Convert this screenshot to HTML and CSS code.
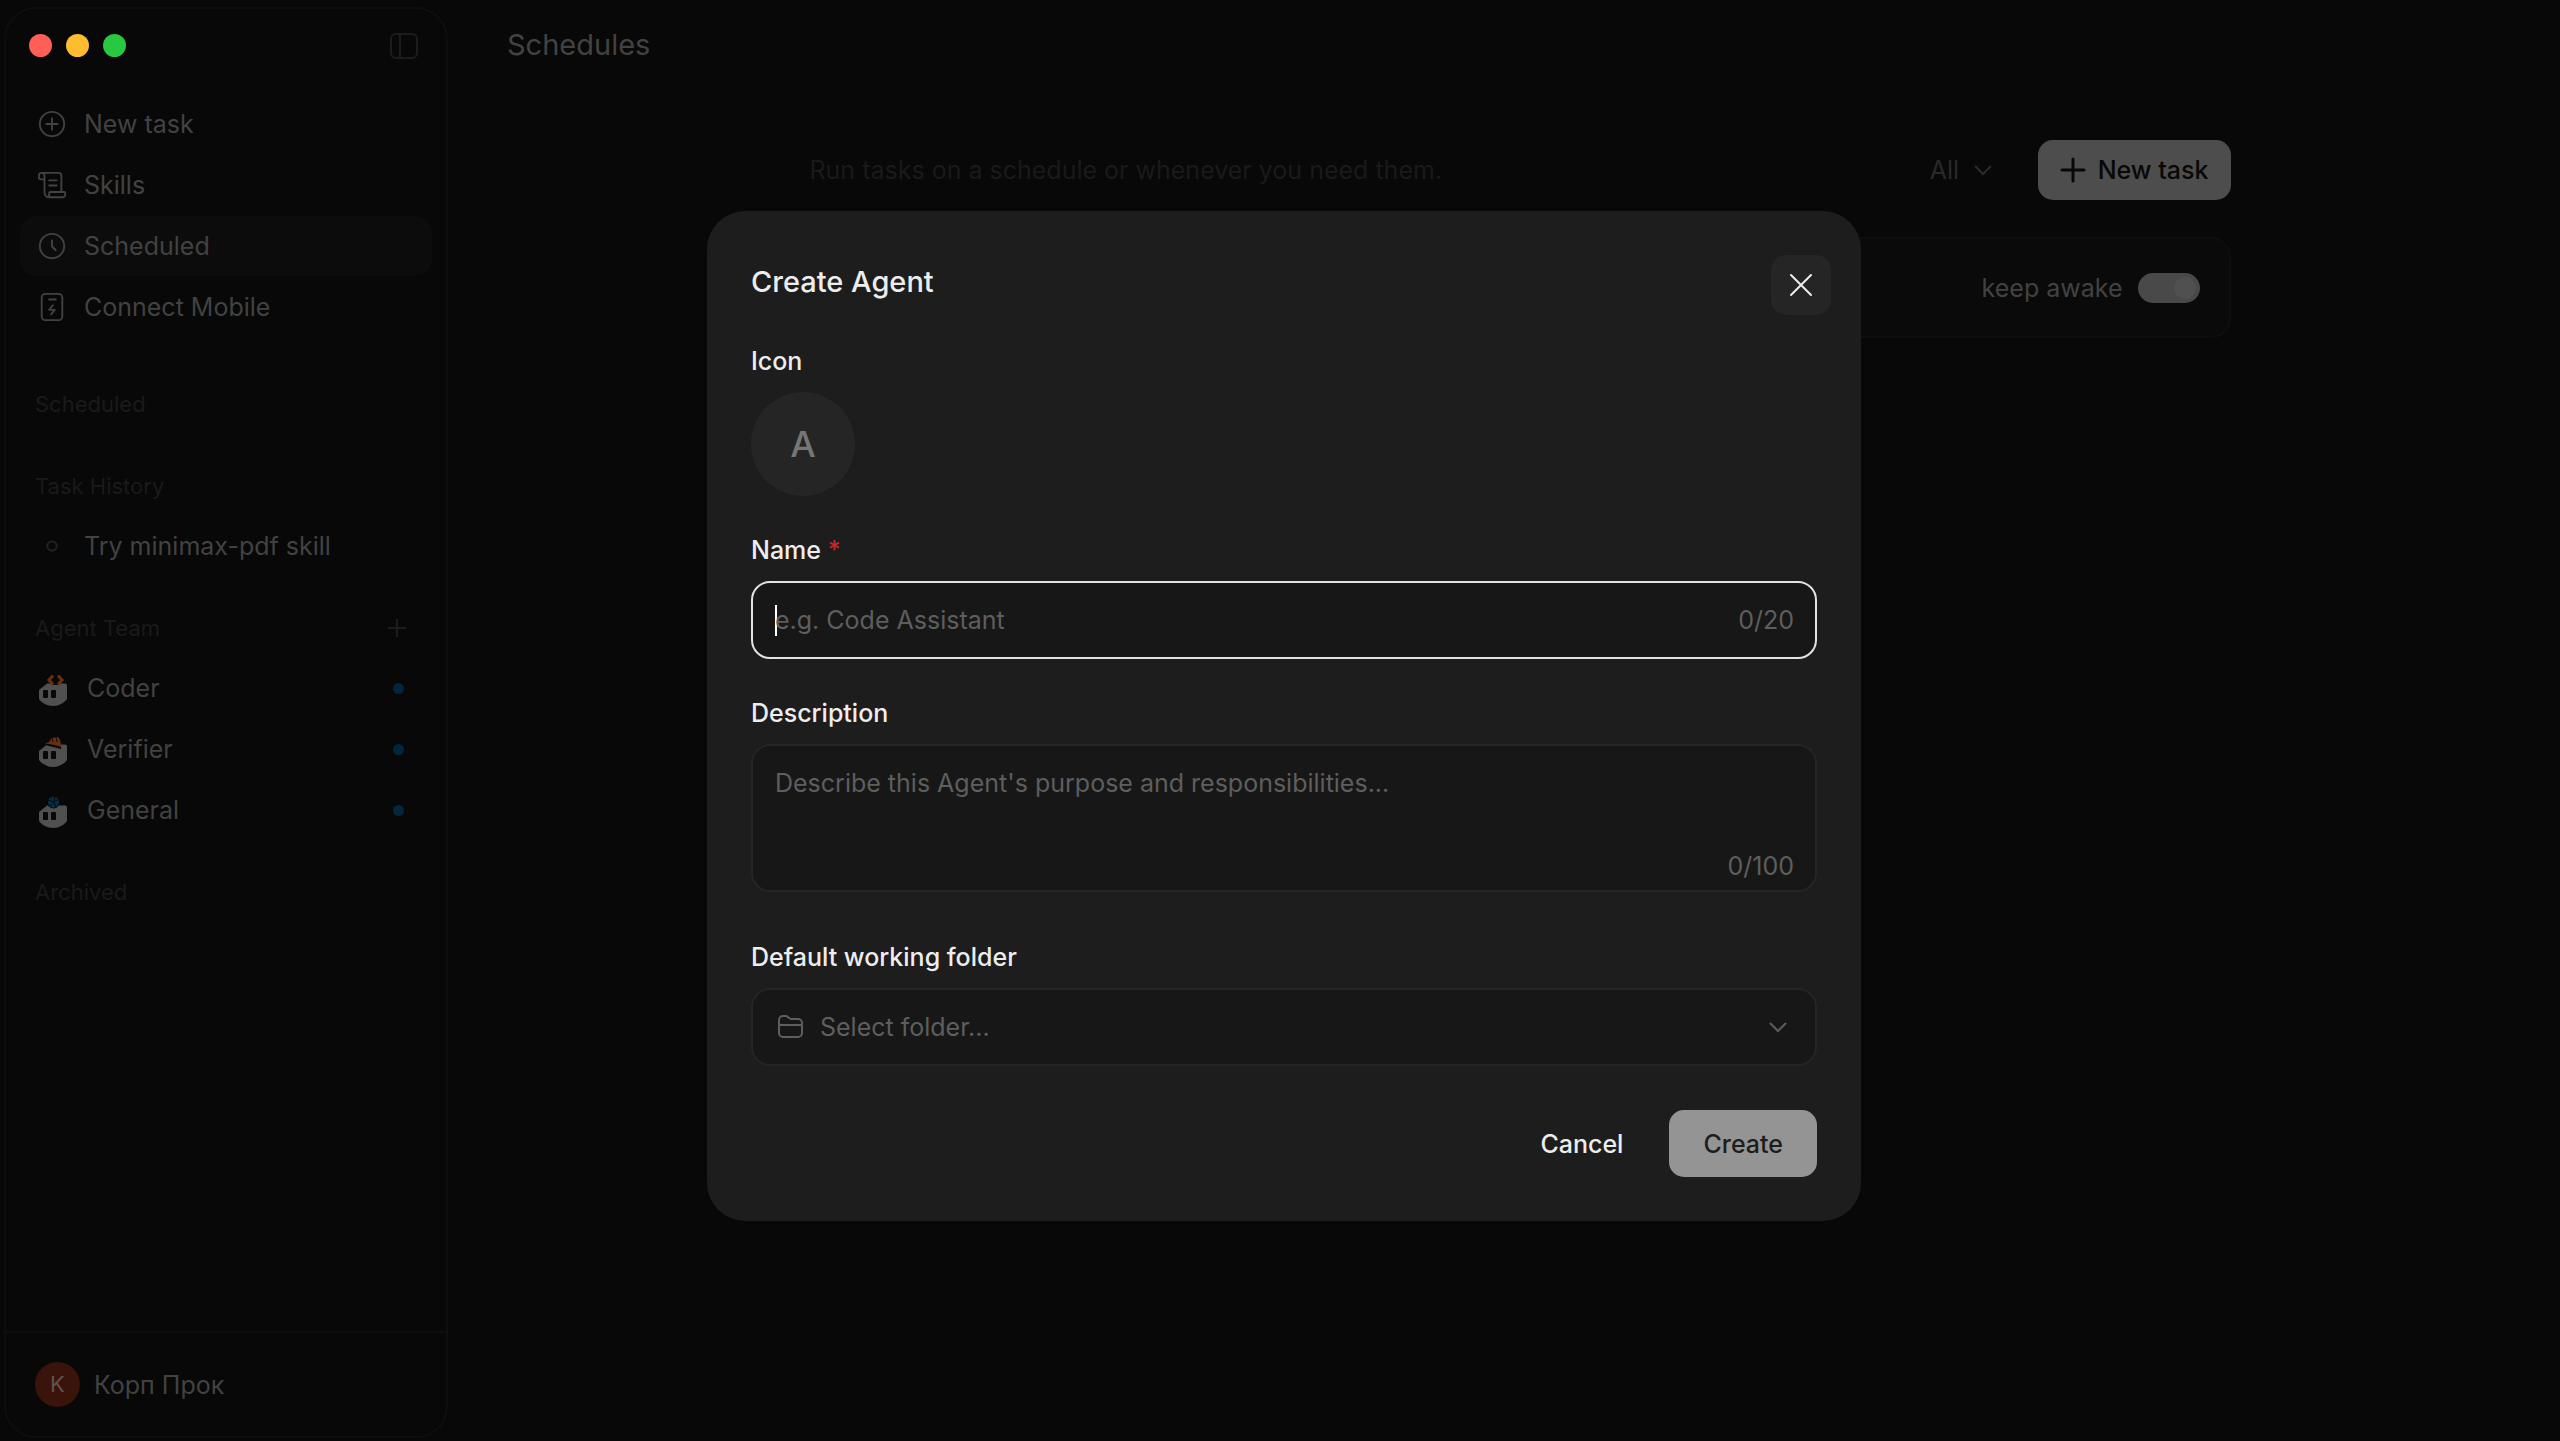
FILE: index.html
```
<!DOCTYPE html>
<html lang="en">

<head>
    <meta charset="UTF-8">
    <title>Schedules</title>
    <link rel="stylesheet" href="styles.css">
</head>

<body>
    <div class="app">
        <aside class="sidebar">
            <div class="titlebar">
                <div class="lights">
                    <span class="light red"></span>
                    <span class="light yellow"></span>
                    <span class="light green"></span>
                </div>
                <button class="icon-btn" type="button" aria-label="Toggle sidebar">
                    <svg width="28" height="26" viewBox="0 0 28 26" fill="none" stroke="currentColor" stroke-width="2"><rect x="1" y="1" width="26" height="24" rx="5"/><path d="M10 1v24"/></svg>
                </button>
            </div>

            <nav class="list">
                <a class="item" href="#">
                    <svg class="icon" viewBox="0 0 32 32"><circle cx="16" cy="16" r="13"/><path d="M16 10v12M10 16h12"/></svg>
                    <span>New task</span>
                </a>
                <a class="item" href="#">
                    <svg class="icon" viewBox="0 0 32 32"><path d="M8 10H4.500a2.500 2.500 0 0 1-2.500-2.500V6a3 3 0 0 1 6 0v18a5 5 0 0 0 5 5h14a3 3 0 0 0 3-3v-1.500a1 1 0 0 0-1-1H14a1 1 0 0 0-1 1V26a3 3 0 0 1-2 3M5 3h18a3 3 0 0 1 3 3v17M13 11h8M13 16.500h8"/></svg>
                    <span>Skills</span>
                </a>
                <a class="item active" href="#">
                    <svg class="icon" viewBox="0 0 32 32"><circle cx="16" cy="16" r="13"/><path d="M16 10v6.500l4 4"/></svg>
                    <span>Scheduled</span>
                </a>
                <a class="item" href="#">
                    <svg class="icon" viewBox="0 0 32 32"><rect x="5" y="2" width="22" height="28" rx="4"/><path d="M13 8h7M17 14l-4 5h6l-4 5"/></svg>
                    <span>Connect Mobile</span>
                </a>
            </nav>

            <div class="sections">
                <section>
                    <h2 class="heading">Scheduled</h2>
                </section>
                <section>
                    <h2 class="heading">Task History</h2>
                    <a class="item" href="#">
                        <svg class="icon faint" viewBox="0 0 32 32"><circle cx="16" cy="16" r="5"/></svg>
                        <span>Try minimax-pdf skill</span>
                    </a>
                </section>
                <section>
                    <h2 class="heading">Agent Team
                        <button class="icon-btn" type="button" aria-label="Add agent">
                            <svg width="20" height="20" viewBox="0 0 20 20" fill="none" stroke="currentColor" stroke-width="2"><path d="M10 1v18M1 10h18"/></svg>
                        </button>
                    </h2>
                    <div class="list">
                        <a class="item agent" href="#">
                            <svg class="bot" viewBox="0 0 32 36"><path class="head" d="M3 20l8-6.500h18q2 0 2 2V29c-3 4-8 7-14 7S6 33 3 29z"/><rect class="eye" x="7" y="20" width="5" height="8" rx="1"/><rect class="eye" x="15" y="20" width="5" height="8" rx="1"/><path class="gap" d="M16 15h8l-4-4z"/><path class="hat-line" d="M17 5.500l-4 4.500 4 4.500M22 5.500l4 4.500-4 4.500"/></svg>
                            <span>Coder</span>
                            <i class="dot"></i>
                        </a>
                        <a class="item agent" href="#">
                            <svg class="bot" viewBox="0 0 32 36"><path class="head" d="M3 20l8-6.500h18q2 0 2 2V29c-3 4-8 7-14 7S6 33 3 29z"/><rect class="eye" x="7" y="20" width="5" height="8" rx="1"/><rect class="eye" x="15" y="20" width="5" height="8" rx="1"/><path class="gap" d="M9 14l16 4v-5H9z"/><path class="hat" d="M9 12.500l5-2c0-3 3-4 4-4l4-.5c2 2 3 5 3 10-5-2-10-3-16-3.500z"/><path class="crease" d="M16 7l1 4M20 6l1 5"/></svg>
                            <span>Verifier</span>
                            <i class="dot"></i>
                        </a>
                        <a class="item agent" href="#">
                            <svg class="bot" viewBox="0 0 32 36"><path class="head" d="M3 20l8-6.500h18q2 0 2 2V29c-3 4-8 7-14 7S6 33 3 29z"/><rect class="eye" x="7" y="20" width="5" height="8" rx="1"/><rect class="eye" x="15" y="20" width="5" height="8" rx="1"/><circle class="gap" cx="17.500" cy="10" r="6.500"/><circle class="ball" cx="17.500" cy="10" r="5.500"/><path class="crease" d="M12 8l6 2 1-6M18 10l-5 5M18 10l2 6M18 10l5-3"/></svg>
                            <span>General</span>
                            <i class="dot"></i>
                        </a>
                    </div>
                </section>
                <section>
                    <h2 class="heading">Archived</h2>
                </section>
            </div>

            <footer class="user">
                <span class="avatar">K</span>
                <span>Корп Прок</span>
            </footer>
        </aside>

        <main class="main">
            <h1 class="page-title">Schedules</h1>
            <div class="content">
                <div class="toolbar">
                    <p class="intro">Run tasks on a schedule or whenever you need them.</p>
                    <div class="filter">
                        <select aria-label="Filter">
                            <option>All</option>
                        </select>
                        <svg width="18" height="11" viewBox="0 0 18 11" fill="none" stroke="currentColor" stroke-width="2"><path d="M1 1l8 8 8-8"/></svg>
                    </div>
                    <button class="new-btn" type="button">
                        <svg width="26" height="26" viewBox="0 0 26 26" fill="none" stroke="currentColor" stroke-width="3" stroke-linecap="round"><path d="M13 2v22M2 13h22"/></svg>
                        New task
                    </button>
                </div>
                <div class="awake">
                    <label for="awake">keep awake</label>
                    <input class="switch" id="awake" type="checkbox" checked>
                </div>
            </div>
        </main>
    </div>

    <div class="overlay">
        <form class="modal" role="dialog" aria-labelledby="modal-title">
            <header class="modal-head">
                <h2 id="modal-title">Create Agent</h2>
                <button class="close" type="button" aria-label="Close">
                    <svg width="24" height="24" viewBox="0 0 24 24" fill="none" stroke="currentColor" stroke-width="2" stroke-linecap="round"><path d="M2 2l20 20M22 2L2 22"/></svg>
                </button>
            </header>

            <div class="group">
                <label for="icon">Icon</label>
                <button class="agent-icon" id="icon" type="button">A</button>
            </div>

            <div class="group">
                <label for="name">Name <span class="required">*</span></label>
                <div class="field focused">
                    <input id="name" type="text" maxlength="20" placeholder="e.g. Code Assistant">
                    <span class="count">0/20</span>
                </div>
            </div>

            <div class="group">
                <label for="description">Description</label>
                <div class="field area">
                    <textarea id="description" maxlength="100" placeholder="Describe this Agent's purpose and responsibilities..."></textarea>
                    <span class="count">0/100</span>
                </div>
            </div>

            <div class="group folder">
                <label for="folder">Default working folder</label>
                <div class="field">
                    <svg width="28" height="26" viewBox="-2 0 28 26" fill="none" stroke="currentColor" stroke-width="2" stroke-linejoin="round"><path d="M2 6a4 4 0 0 1 4-4h3c2 0 3 3 5 3h7a4 4 0 0 1 4 4v10a4 4 0 0 1-4 4H6a4 4 0 0 1-4-4zM2 11h23"/></svg>
                    <select id="folder">
                        <option>Select folder...</option>
                    </select>
                    <svg class="chevron" width="18" height="11" viewBox="0 0 18 11" fill="none" stroke="currentColor" stroke-width="2"><path d="M1 1l8 8 8-8"/></svg>
                </div>
            </div>

            <div class="actions">
                <button class="cancel" type="button">Cancel</button>
                <button class="create" type="submit">Create</button>
            </div>
        </form>
    </div>
</body>

</html>
```
FILE: styles.css
```
* {
    box-sizing: border-box;
    margin: 0;
    padding: 0;
}
body {
    background: #080808;
    color: #424242;
    font-family: Inter, "Liberation Sans", sans-serif;
    font-size: 25px;
    line-height: 40px;
}
a {
    color: inherit;
    text-decoration: none;
}
button,
input,
select,
textarea {
    appearance: none;
    background: none;
    border: 0;
    outline: 0;
    color: inherit;
    font: inherit;
}
svg {
    flex: none;
    display: block;
}
.app {
    display: flex;
    min-height: 100vh;
}

/* sidebar */
.sidebar {
    width: 444px;
    flex: none;
    margin: 7px 0 3px 4px;
    display: flex;
    flex-direction: column;
    border: 2px solid #0e0e0e;
    border-radius: 32px;
    background: #080808;
}
.titlebar {
    display: flex;
    justify-content: space-between;
    align-items: center;
    height: 85px;
    padding: 0 28px 12px 23px;
}
.lights {
    display: flex;
    gap: 14px;
}
.light {
    width: 23px;
    height: 23px;
    border-radius: 50%;
}
.light.red {
    background: #ff5f57;
}
.light.yellow {
    background: #febc2e;
}
.light.green {
    background: #28c840;
}
.icon-btn {
    color: #1c1c1c;
}
.list {
    display: flex;
    flex-direction: column;
    gap: 1px;
}
.item {
    display: flex;
    align-items: center;
    gap: 17px;
    height: 60px;
    margin: 0 14px;
    padding: 0 28px 0 17px;
    border-radius: 16px;
}
.item.active {
    background: #0c0c0c;
}
.icon {
    width: 30px;
    height: 30px;
    fill: none;
    stroke: currentColor;
    stroke-width: 2;
    stroke-linecap: round;
    stroke-linejoin: round;
}
.icon.faint {
    color: #242424;
}
.sections {
    display: flex;
    flex-direction: column;
    gap: 22px;
    margin-top: 37px;
    flex: 1;
}
.heading {
    display: flex;
    justify-content: space-between;
    align-items: center;
    height: 60px;
    padding: 0 39px 0 29px;
    color: #1a1a1a;
    font-size: 22px;
    font-weight: 400;
}
.bot {
    width: 32px;
    height: 36px;
}
.head {
    fill: #505050;
}
.eye,
.gap {
    fill: #080808;
}
.hat {
    fill: #6b2f10;
}
.hat-line {
    fill: none;
    stroke: #6b2f10;
    stroke-width: 3;
}
.ball {
    fill: #062d48;
}
.crease {
    fill: none;
    stroke: #0a0a0a;
    stroke-width: 1;
}
.agent {
    gap: 19px;
    padding-left: 16px;
}
.dot {
    width: 11px;
    height: 11px;
    margin-left: auto;
    border-radius: 50%;
    background: #03263d;
}
.user {
    display: flex;
    align-items: center;
    gap: 14px;
    height: 105px;
    padding: 0 29px;
    border-top: 2px solid #0e0e0e;
}
.avatar {
    width: 45px;
    height: 45px;
    border-radius: 50%;
    background: #3a140a;
    color: #5c5451;
    font-size: 22px;
    line-height: 45px;
    text-align: center;
}

/* page */
.main {
    flex: 1;
    display: flex;
    flex-direction: column;
    padding: 25px 60px 0 59px;
}
.page-title {
    font-size: 29px;
    font-weight: 400;
}
.content {
    width: 100%;
    max-width: 1454px;
    margin: 75px auto 0;
}
.toolbar {
    display: flex;
    align-items: center;
    padding-left: 33px;
}
.intro {
    flex: 1;
    color: #1a1a1a;
}
.filter {
    display: flex;
    align-items: center;
    gap: 14px;
    margin-right: 46px;
    color: #2a2a2a;
}
.new-btn {
    display: flex;
    align-items: center;
    gap: 12px;
    height: 60px;
    padding: 0 22px;
    border-radius: 15px;
    background: #4d4d4d;
    color: #080808;
    font-weight: 500;
}
.awake {
    display: flex;
    justify-content: flex-end;
    align-items: center;
    gap: 15px;
    height: 101px;
    margin-top: 37px;
    padding-right: 29px;
    border: 2px solid #0e0e0e;
    border-radius: 20px;
    background: #0a0a0a;
}
.switch {
    width: 62px;
    height: 30px;
    padding: 4px;
    border-radius: 15px;
    background: #494949;
}
.switch::before {
    content: "";
    display: block;
    width: 22px;
    height: 22px;
    border-radius: 50%;
}
.switch:checked::before {
    margin-left: auto;
    background: #505050;
}

/* dialog */
.overlay {
    position: fixed;
    inset: 0 0 9px 8px;
    display: flex;
    align-items: center;
    justify-content: center;
}
.modal {
    width: 1154px;
    padding: 44px;
    border-radius: 38px;
    background: #1d1d1d;
    color: #ededed;
}
.modal-head {
    display: flex;
    justify-content: space-between;
    margin: 0 -14px 26px 0;
}
.modal-head h2 {
    font-size: 29px;
    font-weight: 500;
    line-height: 54px;
}
.close {
    display: flex;
    align-items: center;
    justify-content: center;
    width: 60px;
    height: 60px;
    border-radius: 15px;
    background: #252525;
}
.group {
    display: flex;
    flex-direction: column;
    gap: 11px;
    margin-bottom: 34px;
}
.group label {
    font-weight: 500;
}
.required {
    color: #c0282d;
}
.agent-icon {
    width: 104px;
    height: 104px;
    border-radius: 50%;
    background: #252525;
    color: #767676;
    font-size: 36px;
    font-weight: 500;
}
.field {
    display: flex;
    align-items: center;
    height: 78px;
    padding: 0 21px 0 22px;
    border: 2px solid #252525;
    border-radius: 19px;
    background: #171717;
    color: #5e5e5e;
}
.field.focused {
    border-color: #e2e2e2;
}
/* text caret */
.field.focused::before {
    content: "";
    width: 2px;
    height: 31px;
    margin-right: -2px;
    background: #fff;
}
.field input,
.field textarea,
.field select {
    flex: 1;
    min-width: 0;
}
.field input {
    height: 40px;
}
.field ::placeholder {
    color: #5e5e5e;
    opacity: 1;
}
.area {
    height: 148px;
    align-items: stretch;
    padding-top: 17px;
    padding-bottom: 4px;
}
.area textarea {
    resize: none;
}
.area .count {
    align-self: flex-end;
}
.folder {
    margin-top: 45px;
    margin-bottom: 44px;
}
.field select {
    margin-left: 17px;
}
.chevron {
    margin-right: 7px;
}
.actions {
    display: flex;
    justify-content: flex-end;
    gap: 12px;
}
.actions button {
    height: 67px;
    padding: 0 34px;
    border-radius: 15px;
    font-weight: 500;
}
.actions .create {
    background: #949494;
    color: #1d1d1d;
}
```
